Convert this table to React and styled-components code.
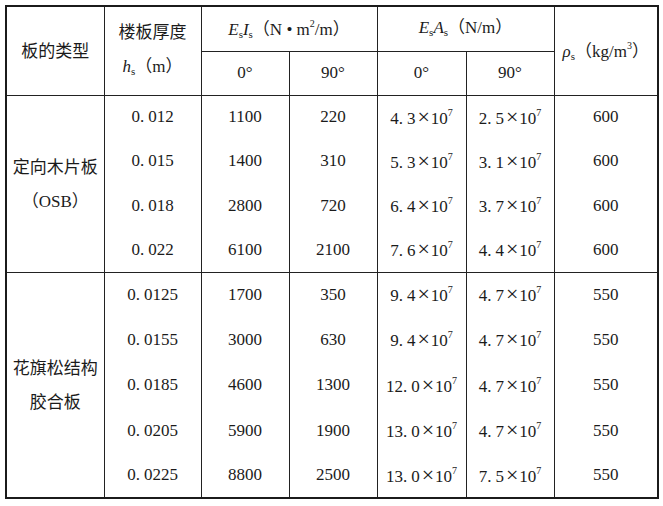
import React from 'react';
import styled, {createGlobalStyle} from 'styled-components';

const GlobalStyle = createGlobalStyle`
  body {
    margin: 0;
    background: #fff;
    color: #1b1b1b;
  }
`

const serif = `"Liberation Serif", "Times New Roman", "DejaVu Serif", "Noto Sans CJK SC", serif`;

const Page = styled.div`
  padding: 5px 0 0 5px;
`

const Table = styled.table`
  border-collapse: collapse;
  table-layout: fixed;
  width: 652px;
  border: 2px solid #1b1b1b;
  font-family: ${serif};
  font-size: 17px;
  color: #1b1b1b;
`

const Group = styled.tbody`
  border-top: 1px solid #222;
`

const Row = styled.tr`
  height: ${p => p.$h}px;
`

const Head = styled.th`
  font-family: ${serif};
  font-size: 17px;
  font-weight: normal;
  border: 1px solid #222;
  padding: 0;
  text-align: center;
  vertical-align: middle;
  line-height: 32px;
  white-space: nowrap;
`

const Cell = styled.td`
  font-family: ${serif};
  font-size: 17px;
  border-left: 1px solid #222;
  border-right: 1px solid #222;
  padding: 0;
  text-align: center;
  vertical-align: middle;
  white-space: nowrap;
`

const Label = styled(Cell)`
  line-height: 32px;
`

const Han = styled.span`
  font-family: "Noto Sans CJK SC", sans-serif;
  font-size: 17px;
`

const Ital = styled.i`
  font-style: italic;
`

const Sub = styled.span`
  font-size: 11px;
  vertical-align: -3px;
`

const Sup = styled.span`
  font-size: 10px;
  vertical-align: 8px;
`

const Times = styled.span`
  font-size: 22px;
  line-height: 1;
  margin: 0 1px 0 2px;
`

const Dot = styled.span`
  margin-right: 4px;
`

const osb = [
  ['0.012', '1100', '220', '4.3', '2.5', '600'],
  ['0.015', '1400', '310', '5.3', '3.1', '600'],
  ['0.018', '2800', '720', '6.4', '3.7', '600'],
  ['0.022', '6100', '2100', '7.6', '4.4', '600'],
]

const plywood = [
  ['0.0125', '1700', '350', '9.4', '4.7', '550'],
  ['0.0155', '3000', '630', '9.4', '4.7', '550'],
  ['0.0185', '4600', '1300', '12.0', '4.7', '550'],
  ['0.0205', '5900', '1900', '13.0', '4.7', '550'],
  ['0.0225', '8800', '2500', '13.0', '7.5', '550'],
]

function Dec({v}) {
  const [a, b] = v.split('.');
  return <><Dot>{a}.</Dot>{b}</>;
}

function Sci({v}) {
  return <><Dec v={v} /><Times>×</Times>10<Sup>7</Sup></>;
}

function DataRow({row, h, label}) {
  return (
    <Row $h={h}>
      {label}
      <Cell><Dec v={row[0]} /></Cell>
      <Cell>{row[1]}</Cell>
      <Cell>{row[2]}</Cell>
      <Cell><Sci v={row[3]} /></Cell>
      <Cell><Sci v={row[4]} /></Cell>
      <Cell>{row[5]}</Cell>
    </Row>
  );
}

export default function App() {
  const osbH = [44, 44, 45, 44];
  const plyH = [45, 45, 46, 45, 45];

  return (
    <Page>
      <GlobalStyle />
      <Table>
        <colgroup>
          <col style={{width: 98}} />
          <col style={{width: 97}} />
          <col style={{width: 88}} />
          <col style={{width: 88}} />
          <col style={{width: 89}} />
          <col style={{width: 88}} />
          <col style={{width: 104}} />
        </colgroup>
        <thead>
          <Row $h={45}>
            <Head rowSpan={2}><Han>板的类型</Han></Head>
            <Head rowSpan={2}>
              <Han>楼板厚度</Han><br />
              <Ital>h</Ital><Sub>s</Sub><Han>（</Han>m<Han>）</Han>
            </Head>
            <Head colSpan={2}>
              <Ital>E</Ital><Sub>s</Sub><Ital>I</Ital><Sub>s</Sub><Han>（</Han>N • m<Sup>2</Sup>/m<Han>）</Han>
            </Head>
            <Head colSpan={2}>
              <Ital>E</Ital><Sub>s</Sub><Ital>A</Ital><Sub>s</Sub><Han>（</Han>N/m<Han>）</Han>
            </Head>
            <Head rowSpan={2}>
              <Ital>ρ</Ital><Sub>s</Sub><Han>（</Han>kg/m<Sup>3</Sup><Han>）</Han>
            </Head>
          </Row>
          <Row $h={44}>
            <Head>0°</Head>
            <Head>90°</Head>
            <Head>0°</Head>
            <Head>90°</Head>
          </Row>
        </thead>
        <Group>
          {osb.map((row, i) => (
            <DataRow
              key={row[0]}
              row={row}
              h={osbH[i]}
              label={i === 0 ? (
                <Label rowSpan={osb.length}>
                  <Han>定向木片板</Han><br /><Han>（</Han>OSB<Han>）</Han>
                </Label>
              ) : null}
            />
          ))}
        </Group>
        <Group>
          {plywood.map((row, i) => (
            <DataRow
              key={row[0]}
              row={row}
              h={plyH[i]}
              label={i === 0 ? (
                <Label rowSpan={plywood.length}>
                  <Han>花旗松结构</Han><br /><Han>胶合板</Han>
                </Label>
              ) : null}
            />
          ))}
        </Group>
      </Table>
    </Page>
  );
}
